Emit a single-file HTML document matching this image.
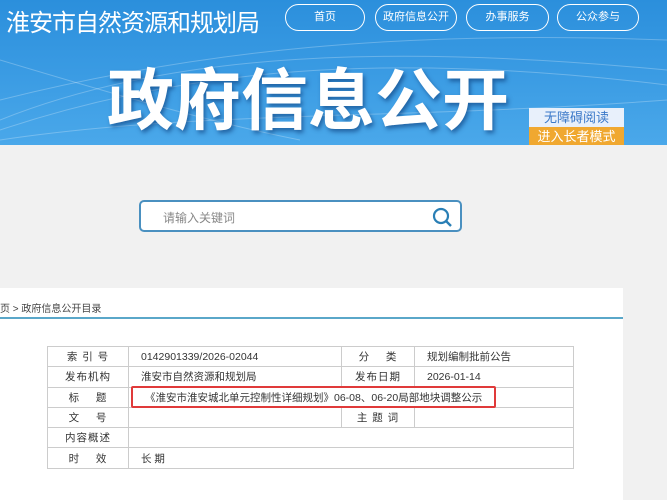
<!DOCTYPE html>
<html><head><meta charset="utf-8"><style>
*{margin:0;padding:0;box-sizing:border-box}
body{width:667px;height:500px;overflow:hidden;background:#f1f1f1;font-family:"Liberation Sans","Noto Sans CJK SC",sans-serif;position:relative}
.hd{position:absolute;left:0;top:0;width:667px;height:145px;background:linear-gradient(180deg,#2b8fdc 0%,#3a9be3 50%,#4aa8ea 100%);overflow:hidden}
.hd svg{position:absolute;left:0;top:0}
.logo{position:absolute;left:6px;top:3px;color:#fff;font-size:24px;letter-spacing:-1px}
.nav{position:absolute;top:4px;height:27px;border:1.5px solid #fff;border-radius:14px;color:#fff;font-size:11px;text-align:center;line-height:24px}
.big{position:absolute;left:107px;top:62px;color:#fff;font-size:67px;font-weight:bold;letter-spacing:0;line-height:80px;text-shadow:2px 3px 4px rgba(0,40,100,.5)}
.b1{position:absolute;left:529px;top:108px;width:95px;height:19px;background:#e8f0fb;color:#3a78c8;font-size:13px;text-align:center;line-height:19px}
.b2{position:absolute;left:529px;top:127px;width:95px;height:20px;background:#f0a830;color:#fff;font-size:13px;text-align:center;line-height:20px}
.sb{position:absolute;left:139px;top:200px;width:323px;height:32px;background:#fff;border:2px solid #4a90c0;border-radius:5px}
.sb span{position:absolute;left:22px;top:7px;color:#888;font-size:12px}
.panel{position:absolute;left:0;top:288px;width:623px;height:212px;background:#fff}
.bc{position:absolute;left:0;top:12px;font-size:10px;color:#444}
.line{position:absolute;left:0;top:29px;width:623px;height:2px;background:#5aa7c9}
table{position:absolute;left:47px;top:58px;border-collapse:collapse;font-size:10.5px;color:#333}
td{border:1px solid #ccc;height:20.3px;padding:0 0 0 12px}
td.l{text-align:center;padding:0;letter-spacing:1px}
.red{position:absolute;left:131px;top:386px;width:365px;height:22px;border:2px solid #e03a3a;border-radius:2px}
</style></head><body>
<div class="hd">
<svg width="667" height="145"><g fill="none" stroke="#fff" stroke-opacity=".25" stroke-width="1">
<path d="M0 120 C150 60 350 40 667 70"/><path d="M0 130 C180 70 380 50 667 85"/><path d="M0 100 C200 50 400 30 667 40"/><path d="M0 140 C200 110 400 120 667 100"/><path d="M0 60 C100 90 200 120 300 140"/></g></svg>
<div class="logo">淮安市自然资源和规划局</div>
<div class="nav" style="left:285px;width:80px">首页</div>
<div class="nav" style="left:375px;width:82px">政府信息公开</div>
<div class="nav" style="left:466px;width:83px">办事服务</div>
<div class="nav" style="left:557px;width:82px">公众参与</div>
<div class="big">政府信息公开</div>
<div class="b1">无障碍阅读</div>
<div class="b2">进入长者模式</div>
</div>
<div class="sb"><span>请输入关键词</span>
<svg style="position:absolute;left:290px;top:4px" width="22" height="22"><circle cx="10" cy="10" r="7" fill="none" stroke="#2a7fb5" stroke-width="2.2"/><path d="M15 15 L20 20" stroke="#2a7fb5" stroke-width="2.4"/></svg></div>
<div class="panel">
<div class="bc">页 &gt; 政府信息公开目录</div>
<div class="line"></div>
<table>
<tr><td class="l" style="width:81px">索 引 号</td><td style="width:213px">0142901339/2026-02044</td><td class="l" style="width:73px">分&nbsp;&nbsp;&nbsp;&nbsp;类</td><td style="width:159px">规划编制批前公告</td></tr>
<tr><td class="l">发布机构</td><td>淮安市自然资源和规划局</td><td class="l">发布日期</td><td>2026-01-14</td></tr>
<tr><td class="l">标&nbsp;&nbsp;&nbsp;&nbsp;题</td><td colspan="3" style="padding-left:16px">《淮安市淮安城北单元控制性详细规划》06-08、06-20局部地块调整公示</td></tr>
<tr><td class="l">文&nbsp;&nbsp;&nbsp;&nbsp;号</td><td></td><td class="l">主 题 词</td><td></td></tr>
<tr><td class="l">内容概述</td><td colspan="3"></td></tr>
<tr><td class="l">时&nbsp;&nbsp;&nbsp;&nbsp;效</td><td colspan="3">长 期</td></tr>
</table>
</div>
<div class="red"></div>
</body></html>
